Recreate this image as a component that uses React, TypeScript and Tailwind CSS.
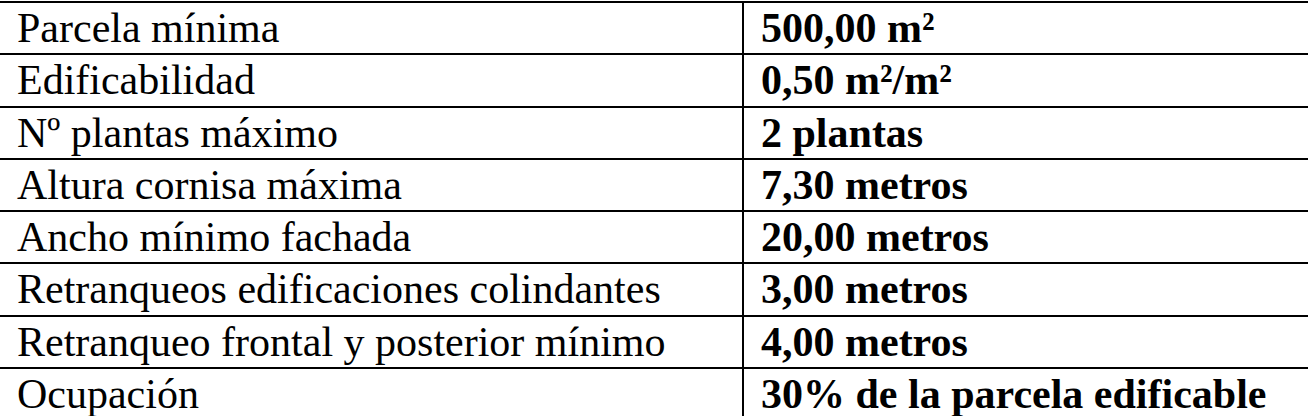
const rows = [
  ["Parcela mínima", "500,00 m²"],
  ["Edificabilidad", "0,50 m²/m²"],
  ["Nº plantas máximo", "2 plantas"],
  ["Altura cornisa máxima", "7,30 metros"],
  ["Ancho mínimo fachada", "20,00 metros"],
  ["Retranqueos edificaciones colindantes", "3,00 metros"],
  ["Retranqueo frontal y posterior mínimo", "4,00 metros"],
  ["Ocupación", "30% de la parcela edificable"],
];

export default function App() {
  return (
    <div className="w-[1308px] h-[416px] overflow-hidden bg-white pt-[1px] text-black font-['Liberation_Serif',serif] text-[42px] leading-[46px]">
      {rows.map(([label, value]) => (
        <div key={label} className="flex h-[52.3px] border-t-2 border-black">
          <div className="w-[744px] shrink-0 border-r-2 border-black pl-[17px] pt-[2px] whitespace-nowrap">
            {label}
          </div>
          <div className="flex-1 pl-[17px] pt-[2px] font-bold whitespace-nowrap">{value}</div>
        </div>
      ))}
    </div>
  );
}
